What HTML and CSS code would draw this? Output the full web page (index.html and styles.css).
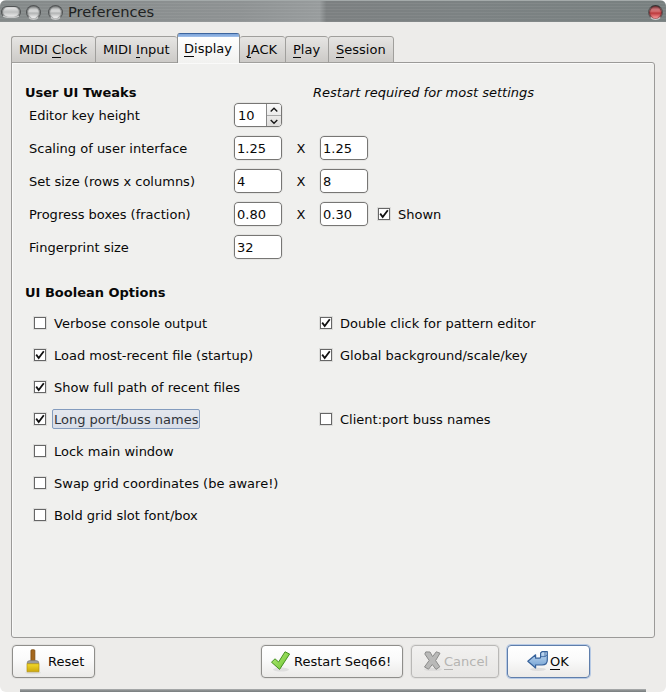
FILE: index.html
```
<!DOCTYPE html>
<html lang="en">
<head>
<meta charset="utf-8">
<title>Preferences</title>
<link rel="stylesheet" href="styles.css">
</head>
<body>
<svg class="defs" width="0" height="0">
  <defs>
    <linearGradient id="leaf" x1="0" y1="0" x2="1" y2="1"><stop offset="0" stop-color="#b5ee78"/><stop offset="1" stop-color="#6bc22f"/></linearGradient>
    <linearGradient id="blue" x1="0" y1="0" x2="0" y2="1"><stop offset="0" stop-color="#c6dcf2"/><stop offset="1" stop-color="#6f9fd2"/></linearGradient>
    <linearGradient id="gold" x1="0" y1="0" x2="0" y2="1"><stop offset="0" stop-color="#f2da2c"/><stop offset="1" stop-color="#cda80c"/></linearGradient>
    <symbol id="tick" viewBox="0 0 12 12"><path d="M2.2 5.6 L4.7 9 L9.8 2.2" fill="none" stroke="#111" stroke-width="1.8"/></symbol>
  </defs>
</svg>
<div class="window">
  <header class="titlebar">
    <span class="knob pill"></span><span class="knob"></span><span class="knob"></span>
    <h1>Preferences</h1>
    <span class="knob close"></span>
  </header>
  <nav class="tabs">
    <span class="tab t1">MIDI <u>C</u>lock</span>
    <span class="tab t2">MIDI <u>I</u>nput</span>
    <span class="tab active"><u>D</u>isplay</span>
    <span class="tab t4"><u>J</u>ACK</span>
    <span class="tab t5"><u>P</u>lay</span>
    <span class="tab t6"><u>S</u>ession</span>
  </nav>
  <main class="panel">
    <div class="heading"><h2>User UI Tweaks</h2><em>Restart required for most settings</em></div>
    <div class="fields">
      <div class="row"><span class="label">Editor key height</span>
        <span class="field spin"><span>10</span><span class="steps"><svg width="14" height="11"><path d="M3.7 7.5 L7 4.2 L10.3 7.5"/></svg><svg width="14" height="11"><path d="M3.7 3.9 L7 7.2 L10.3 3.9"/></svg></span></span></div>
      <div class="row"><span class="label">Scaling of user interface</span><span class="field">1.25</span><span class="times">X</span><span class="field">1.25</span></div>
      <div class="row"><span class="label">Set size (rows x columns)</span><span class="field">4</span><span class="times">X</span><span class="field">8</span></div>
      <div class="row"><span class="label">Progress boxes (fraction)</span><span class="field">0.80</span><span class="times">X</span><span class="field">0.30</span>
        <span class="check shown"><span class="box"><svg><use href="#tick"/></svg></span><span class="text">Shown</span></span></div>
      <div class="row"><span class="label">Fingerprint size</span><span class="field">32</span></div>
    </div>
    <h2 class="second">UI Boolean Options</h2>
    <div class="options">
      <span class="check"><span class="box"></span><span class="text">Verbose console output</span></span>
      <span class="check"><span class="box"><svg><use href="#tick"/></svg></span><span class="text">Double click for pattern editor</span></span>
      <span class="check"><span class="box"><svg><use href="#tick"/></svg></span><span class="text">Load most-recent file (startup)</span></span>
      <span class="check"><span class="box"><svg><use href="#tick"/></svg></span><span class="text">Global background/scale/key</span></span>
      <span class="check wide"><span class="box"><svg><use href="#tick"/></svg></span><span class="text">Show full path of recent files</span></span>
      <span class="check"><span class="box"><svg><use href="#tick"/></svg></span><span class="text focus">Long port/buss names</span></span>
      <span class="check"><span class="box"></span><span class="text">Client:port buss names</span></span>
      <span class="check wide"><span class="box"></span><span class="text">Lock main window</span></span>
      <span class="check wide"><span class="box"></span><span class="text">Swap grid coordinates (be aware!)</span></span>
      <span class="check wide"><span class="box"></span><span class="text">Bold grid slot font/box</span></span>
    </div>
  </main>
  <footer class="actions">
    <span class="button reset">
      <svg width="22" height="26" viewBox="0 0 22 26"><ellipse cx="11" cy="23.8" rx="8" ry="1.5" fill="#ddd"/><rect x="8.9" y="0.7" width="4" height="12" rx="1" fill="#a4671c" stroke="#77460c" stroke-width=".7"/><path d="M5 14.5 Q5 11.5 8 11.5 H14 Q17 11.5 17 14.5Z" fill="#9b9c9b" stroke="#777" stroke-width=".6"/><path d="M5 14.7H17V22.8H5Z" fill="url(#gold)" stroke="#b2920f" stroke-width=".7"/></svg>Reset</span>
    <span class="button restart">
      <svg width="22" height="22" viewBox="0 0 22 22"><ellipse cx="11" cy="18.6" rx="8" ry="2" fill="#dededd"/><path d="M1.5 11.2 L5 7.8 L8.6 11 L15 .8 L19.6 3 L9.6 18.4Z" fill="url(#leaf)" stroke="#459022" stroke-width="1" stroke-linejoin="round"/></svg>Restart Seq66!</span>
    <span class="button cancel">
      <svg width="22" height="22" viewBox="0 0 22 22"><ellipse cx="11" cy="18.5" rx="9" ry="1.6" fill="#dddcdb"/><path d="M3.8 .9 L8 1 L10.6 5.6 L14.3 .8 L18 2.2 L13.6 9.6 L17.8 15.8 L14 18.4 L10.3 13.5 L6.5 18.2 L2.5 16 L7.2 9.4 L2.8 3Z" fill="#b9b9b8" stroke="#8c8c8b" stroke-linejoin="round"/></svg><span><u>C</u>ancel</span></span>
    <span class="button ok">
      <svg width="22" height="22" viewBox="0 0 22 22"><ellipse cx="11" cy="18.3" rx="8" ry="1.6" fill="#ddd"/><path d="M.8 10.3 L8.6 3.8 V7.2 H12.2 Q13.6 7.2 13.6 5.9 V2 L15 .7 H20.3 V9 Q20.3 14 15 14 H8.6 V17Z" fill="url(#blue)" stroke="#36619a" stroke-width="1.2" stroke-linejoin="round"/><path d="M13.9 5.6 H18 L20 4 M18 5.6 V1" fill="none" stroke="#36619a" stroke-width=".8"/></svg><span><u>O</u>K</span></span>
  </footer>
  <div class="bottom-edge"></div>
</div>
</body>
</html>
```
FILE: styles.css
```
* { box-sizing: border-box; }
body { margin: 0; background: #fff; font: 13px/16px "DejaVu Sans", sans-serif; color: #080808; }
.defs { display: block; }
h1, h2 { margin: 0; font-size: inherit; }
u { text-decoration: none; box-shadow: inset 0 -1px #080808; display: inline-block; height: 16px; }
.window { width: 666px; height: 692px; background: #edecea; display: flex; flex-direction: column; border-radius: 6px; overflow: hidden; }

.titlebar { height: 22px; flex: none; display: flex; align-items: center; padding: 1px 3px 0 1px; border-top: 1px solid #a4aaaa;
  background: repeating-linear-gradient(transparent 0 2px, rgba(255,255,255,.06) 2px 3px), linear-gradient(90deg, #848989, #8e9293 36%, #989c9d 48%, #7c8081 49%, #7c8283 70%, #788080); }
.titlebar h1 { font-size: 14.67px; font-weight: normal; line-height: 20px; margin: -1px 0 0 -2px; flex: 1; color: #202222; }
.knob { width: 15px; height: 15px; margin-right: 7px; border-radius: 50%; border: 1px solid #515455; border-bottom-color: #c4c6c6;
  background: linear-gradient(#707373, #c9cbcb 25%, #d8d9d9 40%, #b2b4b4 55%, #f0f0f0 90%); box-shadow: inset 1px 0 1px #7c7f7f, inset -1px 0 1px #7c7f7f; }
.knob.pill { width: 20px; height: 12px; margin-right: 5px; border-radius: 6px; background: linear-gradient(#eee, #bdbfbf 50%, #eee); }
.knob.close { margin-right: 0; border-color: #333 #555 #c9cccc; background: linear-gradient(#6d2c30, #c87478 25%, #d46e70 40%, #bd3a3d 55%, #f59092 90%); box-shadow: inset 1px 0 1px #6d3336, inset -1px 0 1px #6d3336; }

.tabs { display: flex; align-items: flex-end; height: 41px; flex: none; padding-left: 11px; position: relative; z-index: 1; }
.tab { height: 27px; padding: 5px 0 0 7px; border: 1px solid #a09f9c; border-right-width: 0; border-radius: 3px 3px 0 0; background: linear-gradient(#e6e5e3, #cccac7); white-space: pre; }
.t1 { width: 84px; }
.t2 { width: 82px; }
.t4 { width: 45px; border-left-width: 0; }
.t5 { width: 43px; }
.t6 { width: 66px; border-right-width: 1px; }
.tab.active { width: 63px; height: 30px; padding: 8px 0 0 6px; border: 1px solid #929290; border-top: 0; border-bottom: 0; background: linear-gradient(#3d659e 0 1px, #82a8dc 1px 2px, #a5c3ec 4px, #fff 4px, #f1f1ef); }

.panel { margin: -1px 11px 0; height: 576px; flex: none; border: 1px solid #9b9a98; border-radius: 0 3px 3px 3px; background: #f0f0ee; padding: 22px 13px 0; box-shadow: inset 1px 1px #fafaf9; }
.heading { display: flex; }
.heading h2 { width: 288px; }
.fields { display: grid; row-gap: 7px; margin-top: 1px; }
.row { display: flex; align-items: center; height: 26px; padding-left: 4px; }
.label { width: 204px; padding-top: 2px; }
.field { width: 50px; height: 26px; border: 1px solid #e4e4e2; border-radius: 5px; padding: 5px 0 0 3px; background: #fff; box-shadow: inset 0 0 0 1px #777674; }
.times { width: 36px; text-align: center; padding-top: 2px; }
.spin { display: flex; padding-left: 4px; }
.spin > span:first-child { width: 28px; }
.steps { display: flex; flex-direction: column; width: 15px; height: 22px; margin-top: -4px; border-left: 1px solid #888; background: linear-gradient(#fafafa, #dedddb); border-radius: 0 3px 3px 0; }
.steps svg + svg { border-top: 1px solid #aaa; }
.steps path { fill: none; stroke: #181818; stroke-width: 1.4; }
.second { margin-top: 25px; }
.options { display: grid; grid-template-columns: 286px auto; grid-auto-rows: 32px; margin: 6px 0 0 8px; }
.wide { grid-column: 1 / -1; }
.check { display: flex; align-items: center; }
.box { width: 14px; height: 14px; border: 1px solid #dcdcda; box-shadow: inset 0 0 0 1px #666; background: #fff; }
.box svg { display: block; width: 12px; height: 12px; }
.text { height: 20px; padding: 3px 1px 0; margin-left: 5px; border: 0 solid transparent; border-width: 0 1px; }
.text.focus { border: 1px solid #849cbe; border-radius: 2px; padding: 2px 1px 0; background: linear-gradient(#e3e7ee, #d8dee8); color: #303338; }
.shown { margin-left: 8px; }

.actions { display: flex; padding: 7px 0 0 12px; height: 51px; flex: none; }
.button { height: 33px; border: 1px solid #8f8e8b; border-radius: 4px; display: flex; align-items: center; background: linear-gradient(#fff, #fafafa 45%, #ebeae8); white-space: pre; box-shadow: 0 0 0 1px #e2e1df; }
.button svg { flex: none; }
.reset { width: 83px; padding-left: 9px; gap: 4px; }
.restart { width: 142px; margin-left: 166px; padding-left: 8px; gap: 2px; }
.cancel { width: 88px; margin-left: 8px; padding-left: 10px; color: #b5b4b2; border-color: #b9b8b6; background: linear-gradient(#f2f1f0, #e7e6e4); }
.cancel u { box-shadow: inset 0 -1px #b5b4b2; }
.ok { width: 83px; margin-left: 8px; padding-left: 19px; gap: 1px; border-color: #5f7eab; box-shadow: 0 0 0 1px #b7cae5; }
.bottom-edge { height: 3px; margin: auto 20px 0; background: linear-gradient(#b0b2b2, #7e8384 2px); }
```
